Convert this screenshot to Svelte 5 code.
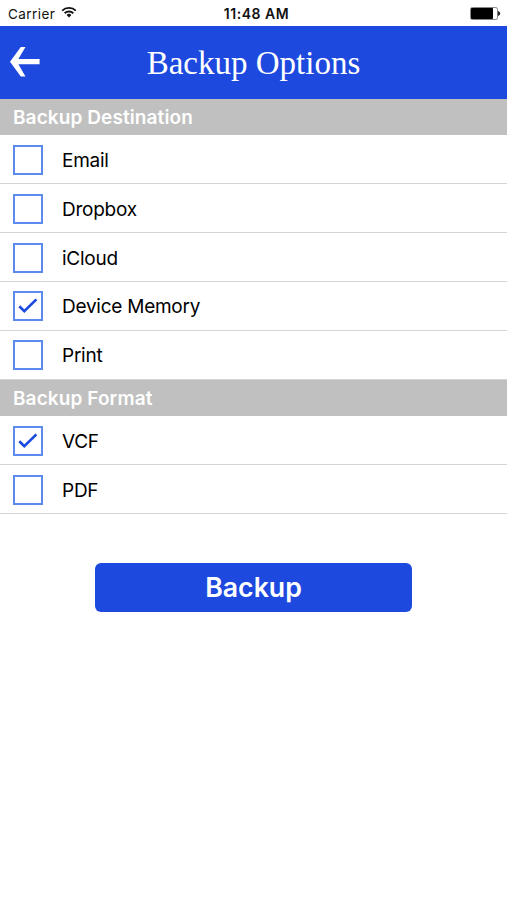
<script lang="ts">
  type Option = { label: string; checked: boolean };

  let sections = $state<Array<{ title: string; options: Option[] }>>([
    {
      title: 'Backup Destination',
      options: [
        { label: 'Email', checked: false },
        { label: 'Dropbox', checked: false },
        { label: 'iCloud', checked: false },
        { label: 'Device Memory', checked: true },
        { label: 'Print', checked: false }
      ]
    },
    {
      title: 'Backup Format',
      options: [
        { label: 'VCF', checked: true },
        { label: 'PDF', checked: false }
      ]
    }
  ]);

  function toggle(option: Option) {
    option.checked = !option.checked;
  }
</script>

<div class="screen">
  <div class="status-bar">
    <div class="carrier">
      <span>Carrier</span>
      <svg width="16" height="12" viewBox="0 0 16 12" fill="none" stroke="#111" stroke-width="1.9">
        <path d="M1.2 4.6a9.8 9.8 0 0 1 13.6 0" />
        <path d="M3.7 7.2a6.2 6.2 0 0 1 8.6 0" />
        <path d="M8 11.4 5.6 9a3.5 3.5 0 0 1 4.8 0z" fill="#111" stroke="none" />
      </svg>
    </div>
    <span class="time">11:48 AM</span>
    <svg class="battery" width="31" height="13" viewBox="0 0 31 13">
      <rect x="0.5" y="0.5" width="27" height="12" rx="1.8" fill="#fff" stroke="#888" />
      <rect x="1" y="1" width="22" height="11" rx="0.8" fill="#000" />
      <path d="M28.4 4.6a2 2 0 0 1 0 3.8z" fill="#222" stroke="#222" />
    </svg>
  </div>

  <header class="nav">
    <button class="back" aria-label="Back">
      <svg width="30" height="30" viewBox="0 0 30 30" fill="#fff">
        <path d="M10.8 0h4.7L8.4 12H29.6v5.3H8.4l7.1 12.3h-4.7L0 14.7z" />
      </svg>
    </button>
    <h1>Backup Options</h1>
  </header>

  {#each sections as section (section.title)}
    <section>
      <h2>{section.title}</h2>
      {#each section.options as option (option.label)}
        <button class="row" role="checkbox" aria-checked={option.checked} onclick={() => toggle(option)}>
          <span class="box">
            {#if option.checked}
              <svg width="20" height="16" viewBox="0 0 20 16" fill="none" stroke="#1c49df" stroke-width="2.7">
                <path d="M1.3 8.3 6.3 13.2 18.4 1.4" />
              </svg>
            {/if}
          </span>
          <span class="label">{option.label}</span>
        </button>
      {/each}
    </section>
  {/each}

  <button class="submit">Backup</button>
</div>

<style>
  :global(body) {
    background: #fff;
  }

  .screen {
    height: 900px;
    display: flex;
    flex-direction: column;
    overflow: hidden;
    font-family: Inter, "Liberation Sans", sans-serif;
    color: #111;
  }

  button {
    font: inherit;
    color: inherit;
    border: 0;
    padding: 0;
    cursor: pointer;
  }

  /* Status bar */
  .status-bar {
    display: grid;
    grid-template-columns: 1fr auto 1fr;
    align-items: center;
    height: 25.6px;
    padding: 2px 6px 0 8px;
    box-sizing: border-box;
    flex-shrink: 0;
    font-size: 13.5px;
  }

  .carrier {
    display: flex;
    align-items: center;
    gap: 5.5px;
    letter-spacing: 0.45px;
  }

  .carrier svg {
    margin-top: -3px;
  }

  .time {
    font-weight: 600;
    font-size: 14px;
    letter-spacing: 0.55px;
    margin-left: 4px;
  }

  .battery {
    justify-self: end;
  }

  /* Navigation */
  .nav {
    display: grid;
    grid-template-columns: 40px 1fr 40px;
    align-items: center;
    height: 73px;
    flex-shrink: 0;
    background: #1d49df;
    color: #fff;
  }

  .back {
    display: flex;
    padding-left: 10px;
    background: none;
  }

  .back svg {
    flex-shrink: 0;
  }

  h1 {
    margin: 2px 0 0;
    text-align: center;
    font-family: Georgia, "Liberation Serif", serif;
    font-size: 33px;
    font-weight: 400;
  }

  /* Option lists */
  h2 {
    height: 36.8px;
    margin: 0;
    padding-left: 13px;
    background: #c0c0c0;
    color: #fff;
    font-size: 19px;
    font-weight: 600;
    letter-spacing: 0.1px;
    line-height: 38px;
  }

  .row {
    display: flex;
    align-items: center;
    gap: 19px;
    width: 100%;
    height: 48.85px;
    padding: 1px 0 0 13px;
    box-sizing: border-box;
    background: #fff;
    border-bottom: 1.5px solid #d5d5d5;
    text-align: left;
  }

  .box {
    display: flex;
    align-items: center;
    justify-content: center;
    width: 30px;
    height: 30px;
    box-sizing: border-box;
    border: 2px solid #5d8aef;
  }

  .label {
    font-size: 19px;
    letter-spacing: -0.25px;
    padding-top: 1px;
    color: #000;
  }

  .submit {
    align-self: center;
    width: 317px;
    height: 49px;
    margin-top: 48.6px;
    border-radius: 6px;
    background: #1d49df;
    color: #fff;
    font-size: 26.7px;
    font-weight: 600;
  }
</style>
